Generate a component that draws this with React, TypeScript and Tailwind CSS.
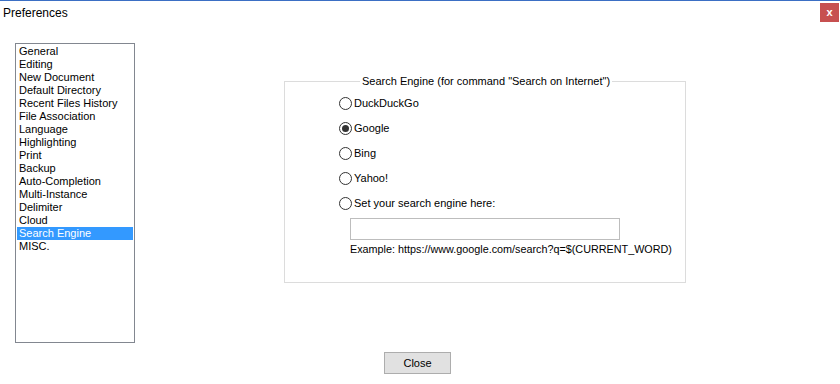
import React from 'react';

const categories = [
  'General',
  'Editing',
  'New Document',
  'Default Directory',
  'Recent Files History',
  'File Association',
  'Language',
  'Highlighting',
  'Print',
  'Backup',
  'Auto-Completion',
  'Multi-Instance',
  'Delimiter',
  'Cloud',
  'Search Engine',
  'MISC.',
];

const engines = ['DuckDuckGo', 'Google', 'Bing', 'Yahoo!', 'Set your search engine here:'];

function Radio({ checked }: { checked?: boolean }) {
  return (
    <span className="flex h-[13px] w-[13px] shrink-0 items-center justify-center rounded-full border border-[#333333] bg-white">
      {checked && <span className="h-[7px] w-[7px] rounded-full bg-[#333333]" />}
    </span>
  );
}

export default function App() {
  const selected = 'Search Engine';

  return (
    <div className="relative h-[384px] w-[840px] overflow-hidden border-t border-[#3b6fc4] bg-white font-['Liberation_Sans',Arial,sans-serif] text-[11px] text-black">
      {/* title bar */}
      <div className="flex h-[24px] items-start justify-between">
        <span className="pl-[3px] pt-[5px] text-[12px] leading-[14px]">Preferences</span>
        <button className="mr-[1px] mt-[2px] flex h-[19px] w-[19px] items-center justify-center bg-[#c75050] text-[11px] font-bold leading-none text-white">
          x
        </button>
      </div>

      <div className="flex pt-[18px]">
        {/* category list */}
        <ul className="ml-[15px] h-[300px] w-[120px] border border-[#828790] px-px pt-px">
          {categories.map((c) => (
            <li
              key={c}
              className={`h-[13px] pl-[2px] leading-[13px] ${c === selected ? 'bg-[#3399ff] text-white' : ''}`}
            >
              {c}
            </li>
          ))}
        </ul>

        {/* search engine group */}
        <fieldset className="ml-[149px] mt-[31px] h-[209px] w-[402px] border border-[#dcdcdc]">
          <legend className="ml-[75px] px-[2px] leading-[14px]">
            Search Engine (for command "Search on Internet")
          </legend>
          <div className="flex flex-col gap-[12px] pl-[54px] pt-[9px]">
            {engines.map((e) => (
              <label key={e} className="flex h-[13px] items-center gap-[2px] leading-[13px]">
                <Radio checked={e === 'Google'} />
                <span>{e}</span>
              </label>
            ))}
          </div>
          <div className="ml-[65px] mt-[8px] h-[22px] w-[270px] border border-[#bdbdbd]" />
          <div className="ml-[65px] mt-[2px] text-[10.8px] leading-[14px]">
            Example: https://www.google.com/search?q=$(CURRENT_WORD)
          </div>
        </fieldset>
      </div>

      <div className="pl-[384px] pt-[9px]">
        <button className="h-[22px] w-[67px] border border-[#adadad] bg-[#e1e1e1] text-[11px] leading-none">
          Close
        </button>
      </div>
    </div>
  );
}
